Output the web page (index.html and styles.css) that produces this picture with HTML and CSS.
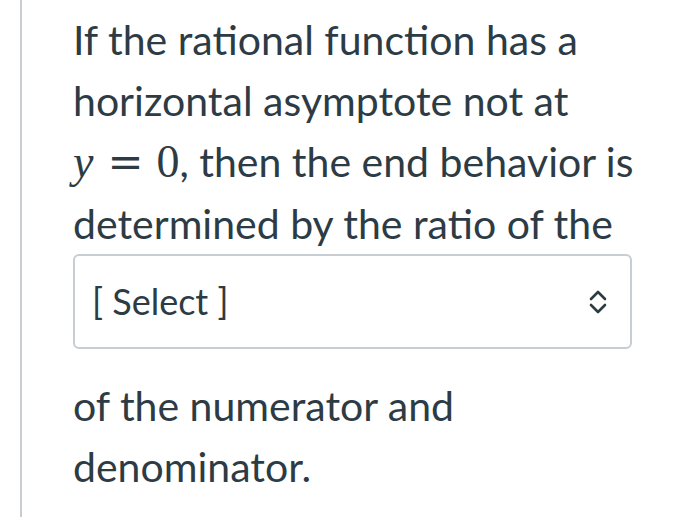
FILE: index.html
```html
<!DOCTYPE html>
<html>
<head>
<meta charset="utf-8">
<link rel="stylesheet" href="styles.css">
</head>
<body>
<div class="page">
  <div class="question">
    <p class="text">If the rational function has a<br>horizontal asymptote not at<br><span class="math"><span class="mi">y</span><span class="mo">=</span><span class="mn">0</span></span>, then the end behavior is<br>determined by the ratio of the</p>
    <div class="select">
      <span class="select-label">[ Select ]</span>
      <svg class="chev" width="20" height="28" viewBox="0 0 20 28">
        <path d="M3 11 L10 4 L17 11" fill="none" stroke="#2d3b45" stroke-width="2.6" stroke-linecap="round" stroke-linejoin="round"/>
        <path d="M3 17 L10 24 L17 17" fill="none" stroke="#2d3b45" stroke-width="2.6" stroke-linecap="round" stroke-linejoin="round"/>
      </svg>
    </div>
    <p class="text after">of the numerator and<br>denominator.</p>
  </div>
</div>
</body>
</html>
```
FILE: styles.css
```css
html, body {
  margin: 0;
  padding: 0;
  background: #ffffff;
}
.page {
  margin-left: 20px;
  border-left: 2px solid #c7cdd1;
  height: 517px;
  padding: 9px 0 0 51px;
  box-sizing: border-box;
}
.question {
  width: 560px;
  font-family: Lato, "Open Sans", sans-serif;
  color: #2d3b45;
}
.text {
  margin: 0;
  font-size: 41px;
  line-height: 61px;
  white-space: nowrap;
}
.after {
  margin-top: 26px;
}
.math {
  font-family: "Liberation Serif", "DejaVu Serif", serif;
  font-size: 46px;
}
.mi {
  font-style: italic;
}
.mo {
  font-family: "DejaVu Serif", serif;
  font-size: 43px;
  margin: 0 13px 0 14px;
}
.select {
  width: 559px;
  height: 95px;
  box-sizing: border-box;
  border: 2px solid #c7cdd1;
  border-radius: 6px;
  display: flex;
  align-items: center;
  justify-content: space-between;
  padding: 0 22px 0 17px;
}
.select-label {
  font-size: 36px;
  margin-top: -2px;
}
.chev {
  display: block;
}
```
